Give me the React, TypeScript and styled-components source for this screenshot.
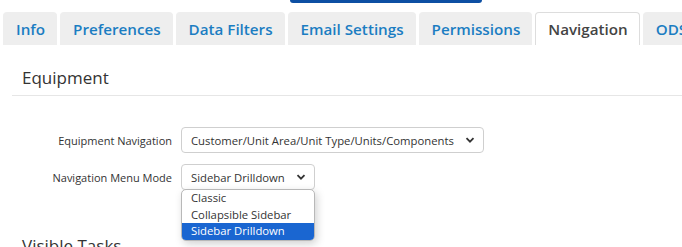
import styled, { createGlobalStyle } from "styled-components";

const GlobalStyle = createGlobalStyle`
  body {
    margin: 0;
    background: #fff;
    font-family: "Open Sans", "Liberation Sans", sans-serif;
    overflow: hidden;
  }
`;

const Page = styled.div`
  width: 682px;
  height: 247px;
  overflow: hidden;
  position: relative;
`;

const TopButton = styled.div`
  margin-left: 290px;
  width: 192px;
  height: 3px;
  background: #0d4fa3;
  border-radius: 0 0 4px 4px;
`;

const TabRow = styled.div`
  display: flex;
  gap: 3px;
  padding: 9px 0 0 3px;
  white-space: nowrap;
`;

const Tab = styled.div<{ $active?: boolean }>`
  flex: none;
  height: 33px;
  box-sizing: border-box;
  padding: 0 11px 0 12px;
  display: flex;
  align-items: center;
  font-size: 15.2px;
  font-weight: 600;
  color: ${(p) => (p.$active ? "#444" : "#1b7dc2")};
  background: ${(p) => (p.$active ? "#fff" : "#eeeeee")};
  border: 1px solid ${(p) => (p.$active ? "#dddddd" : "#eeeeee")};
  border-bottom: none;
  border-radius: 4px 4px 0 0;
`;

const Section = styled.div`
  padding: 22px 0 0 12px;
`;

const Heading = styled.div`
  font-size: 17px;
  color: #333;
  padding: 0 0 6px 10px;
  border-bottom: 1px solid #e6e6e6;
  line-height: 22px;
`;

const Form = styled.div`
  display: grid;
  grid-template-columns: 160px auto;
  column-gap: 9px;
  row-gap: 11px;
  margin-top: 31px;
  align-items: center;
  justify-items: start;
`;

const Label = styled.div`
  justify-self: end;
  font-size: 11px;
  color: #333;
`;

const SelectWrap = styled.div`
  position: relative;
`;

const SelectBox = styled.div`
  height: 26px;
  box-sizing: border-box;
  border: 1px solid #cfcfcf;
  border-radius: 4px;
  display: flex;
  align-items: center;
  gap: 11px;
  padding: 0 8px 0 9px;
  font-size: 11.3px;
  color: #333;
  background: #fff;
`;

const Chevron = () => (
  <svg width="10" height="10" viewBox="0 0 10 10">
    <path d="M1.5 3.2 L5 6.7 L8.5 3.2" fill="none" stroke="#333" strokeWidth="1.8" />
  </svg>
);

const Menu = styled.div`
  position: absolute;
  left: 0;
  right: 0;
  top: 25px;
  background: #fff;
  border: 1px solid #b8b8b8;
  border-radius: 5px;
  overflow: hidden;
  box-shadow: 2px 3px 8px rgba(0, 0, 0, 0.18);
`;

const Option = styled.div<{ $selected?: boolean }>`
  height: 16.7px;
  line-height: 16px;
  padding: 0 9px;
  font-size: 11.3px;
  color: ${(p) => (p.$selected ? "#fff" : "#333")};
  background: ${(p) => (p.$selected ? "#1a66d1" : "transparent")};
`;

const SubHeading = styled.div`
  margin-top: 44px;
  padding-left: 10px;
  font-size: 17px;
  color: #333;
`;

const tabs = ["Info", "Preferences", "Data Filters", "Email Settings", "Permissions", "Navigation", "ODS"];

export default function App() {
  return (
    <Page>
      <GlobalStyle />
      <TopButton />
      <TabRow>
        {tabs.map((t) => (
          <Tab key={t} $active={t === "Navigation"}>
            {t}
          </Tab>
        ))}
      </TabRow>
      <Section>
        <Heading>Equipment</Heading>
        <Form>
          <Label>Equipment Navigation</Label>
          <SelectWrap>
            <SelectBox>
              Customer/Unit Area/Unit Type/Units/Components
              <Chevron />
            </SelectBox>
          </SelectWrap>
          <Label>Navigation Menu Mode</Label>
          <SelectWrap>
            <SelectBox>
              Sidebar Drilldown
              <Chevron />
            </SelectBox>
            <Menu>
              <Option>Classic</Option>
              <Option>Collapsible Sidebar</Option>
              <Option $selected>Sidebar Drilldown</Option>
            </Menu>
          </SelectWrap>
        </Form>
        <SubHeading>Visible Tasks</SubHeading>
      </Section>
    </Page>
  );
}
